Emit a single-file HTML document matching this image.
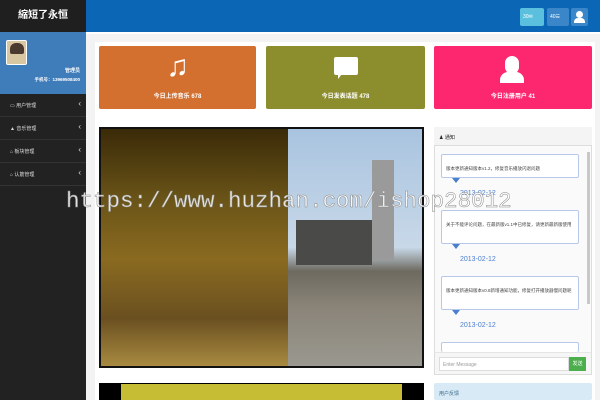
<!DOCTYPE html>
<html><head><meta charset="utf-8"><style>
*{margin:0;padding:0;box-sizing:border-box}
body{width:600px;height:400px;overflow:hidden;background:#f3f3f3;font-family:"Liberation Sans","Noto Sans CJK SC",sans-serif;position:relative}
.a{position:absolute}
.card{position:absolute;top:46px;height:63px;border-radius:2px;color:#fff;font-size:6px;font-weight:bold;text-align:center}
.card span{position:absolute;left:0;right:0;top:45px}
.nav{position:absolute;left:0;width:86px;height:23px;border-bottom:1px solid #333;color:#ddd;font-size:5px;padding:8px 0 0 10px}
.nav:after{content:"‹";position:absolute;right:5px;top:5px;font-size:8px}
.bub{position:absolute;left:441px;width:138px;background:#fff;border:1px solid #b8c8e8;border-radius:2px;font-size:4.5px;color:#444;padding:9px 4px 0 4px;line-height:9px}
.tri{position:absolute;left:452px;width:0;height:0;border-left:4px solid transparent;border-right:4px solid transparent;border-top:5px solid #4a7fd0}
.date{position:absolute;left:460px;font-size:7px;color:#4a7fd0}
</style></head><body>
<div class="a" style="left:0;top:0;width:86px;height:400px;background:#222"></div>
<div class="a" style="left:0;top:0;width:86px;height:32px;background:#1f1f1f;color:#fff;font-size:10px;font-weight:bold;text-align:center;line-height:32px">縮短了永恒</div>
<div class="a" style="left:86px;top:0;width:514px;height:32px;background:#0b67b6"></div>
<div class="a" style="left:86px;top:32px;width:514px;height:2px;background:#fff"></div>
<div class="a" style="left:0;top:32px;width:86px;height:62px;background:#3f7cba"></div>
<div class="a" style="left:6px;top:40px;width:21px;height:25px;background:#d8c7a0;border:1px solid #fff;border-radius:2px"><div class="a" style="left:3px;top:2px;width:14px;height:11px;background:#4a3a30;border-radius:6px 6px 2px 2px"></div></div>
<div class="a" style="left:0;top:67px;font-size:5px;color:#fff;font-weight:bold;text-align:right;width:80px">管理员</div>
<div class="a" style="left:0;top:77px;width:80px;text-align:right;font-size:4.5px;color:#fff;font-weight:bold">手机号：13969508400</div>
<div class="nav" style="top:94px">▭ 用户管理</div>
<div class="nav" style="top:117px">▲ 音乐管理</div>
<div class="nav" style="top:140px">⌂ 板块管理</div>
<div class="nav" style="top:163px">⌂ 认筋管理</div>
<div class="a" style="left:520px;top:8px;width:24px;height:18px;background:#5bc0de;border-radius:2px;color:#fff;font-size:5px;line-height:18px;padding-left:3px">30✉</div>
<div class="a" style="left:547px;top:8px;width:22px;height:18px;background:#3a86c8;border-radius:2px;color:#fff;font-size:5px;line-height:18px;padding-left:3px">40☰</div>
<div class="a" style="left:571px;top:8px;width:17px;height:18px;background:#3a86c8;border-radius:2px"><div class="a" style="left:5px;top:3px;width:7px;height:7px;background:#fff;border-radius:50%"></div><div class="a" style="left:3px;top:10px;width:11px;height:5px;background:#fff;border-radius:4px 4px 0 0"></div></div>
<div class="a" style="left:95px;top:42px;width:500px;height:358px;background:#fff"></div>
<div class="card" style="left:99px;width:157px;background:#d3702f"><div style="font-size:30px;line-height:34px;margin-top:4px">♫</div><span>今日上传音乐 678</span></div>
<div class="card" style="left:266px;width:159px;background:#8c8d2d"><div class="a" style="left:68px;top:11px;width:24px;height:18px;background:#fff;border-radius:2px"></div><div class="a" style="left:72px;top:28px;border-left:4px solid #fff;border-bottom:5px solid transparent;width:0;height:0"></div><span>今日发表话题 478</span></div>
<div class="card" style="left:434px;width:158px;background:#fd2770"><div class="a" style="left:71px;top:10px;width:14px;height:18px;background:#fff;border-radius:7px"></div><div class="a" style="left:66px;top:26px;width:24px;height:11px;background:#fff;border-radius:8px 8px 0 0"></div><span>今日注册用户 41</span></div>
<div class="a" style="left:99px;top:127px;width:325px;height:241px;background:#111"></div>
<div class="a" style="left:101px;top:129px;width:187px;height:237px;background:linear-gradient(180deg,#3a2a08 0%,#6a5418 30%,#8a6a20 55%,#6a5020 80%,#a88a40 100%)"></div>
<div class="a" style="left:288px;top:129px;width:134px;height:237px;background:linear-gradient(180deg,#a9c4e0 0%,#c8d8e8 50%,#6d6a60 60%,#8a8478 75%,#9a9890 100%)"></div>
<div class="a" style="left:372px;top:160px;width:22px;height:100px;background:#9a9a9a"></div>
<div class="a" style="left:296px;top:220px;width:76px;height:45px;background:#4a4a48"></div>
<div class="a" style="left:434px;top:127px;width:158px;height:248px;background:#fafafa;border:1px solid #ddd;border-radius:2px"></div>
<div class="a" style="left:434px;top:127px;width:158px;height:19px;background:#f4f4f4;border-bottom:1px solid #ddd;font-size:5px;padding:7px 5px;color:#222">♟ 通知</div>
<div class="a" style="left:587px;top:152px;width:3px;height:152px;background:#c8c8c8"></div>
<div class="bub" style="top:154px;height:24px">版本更新通知版本v1.2，修复音乐播放闪退问题</div>
<div class="tri" style="top:178px"></div><div class="date" style="top:190px">2013-02-12</div>
<div class="bub" style="top:210px;height:34px">关于不能评论问题，在最新版v1.1中已修复，请更新最新版使用</div>
<div class="tri" style="top:244px"></div><div class="date" style="top:256px">2013-02-12</div>
<div class="bub" style="top:276px;height:34px">版本更新通知版本v0.8新增通知功能，修复打开播放器慢问题呢</div>
<div class="tri" style="top:310px"></div><div class="date" style="top:322px">2013-02-12</div>
<div class="bub" style="top:342px;height:10px;border-bottom:none"></div>
<div class="a" style="left:434px;top:352px;width:158px;height:23px;background:#f6f6f6;border:1px solid #ddd;border-top:1px solid #e6e6e6"></div>
<div class="a" style="left:439px;top:357px;width:130px;height:14px;background:#fff;border:1px solid #ddd;font-size:5px;color:#999;padding:4px 3px">Enter Message</div>
<div class="a" style="left:569px;top:357px;width:17px;height:14px;background:#4cae4c;color:#fff;font-size:5px;text-align:center;line-height:14px">发送</div>
<div class="a" style="left:99px;top:383px;width:325px;height:17px;background:#000"></div>
<div class="a" style="left:121px;top:384px;width:281px;height:16px;background:#c6bd34"></div>
<div class="a" style="left:434px;top:383px;width:158px;height:17px;background:#d8eaf5;border-radius:2px;font-size:5px;color:#3a6a8a;padding:7px 5px">用户反馈</div>
<div class="a" style="left:66px;top:188px;font-family:'Liberation Mono',monospace;font-size:22.5px;color:rgba(255,255,255,0.85);-webkit-text-stroke:0.5px #888;white-space:nowrap">https://www.huzhan.com/ishop28012</div>
</body></html>
